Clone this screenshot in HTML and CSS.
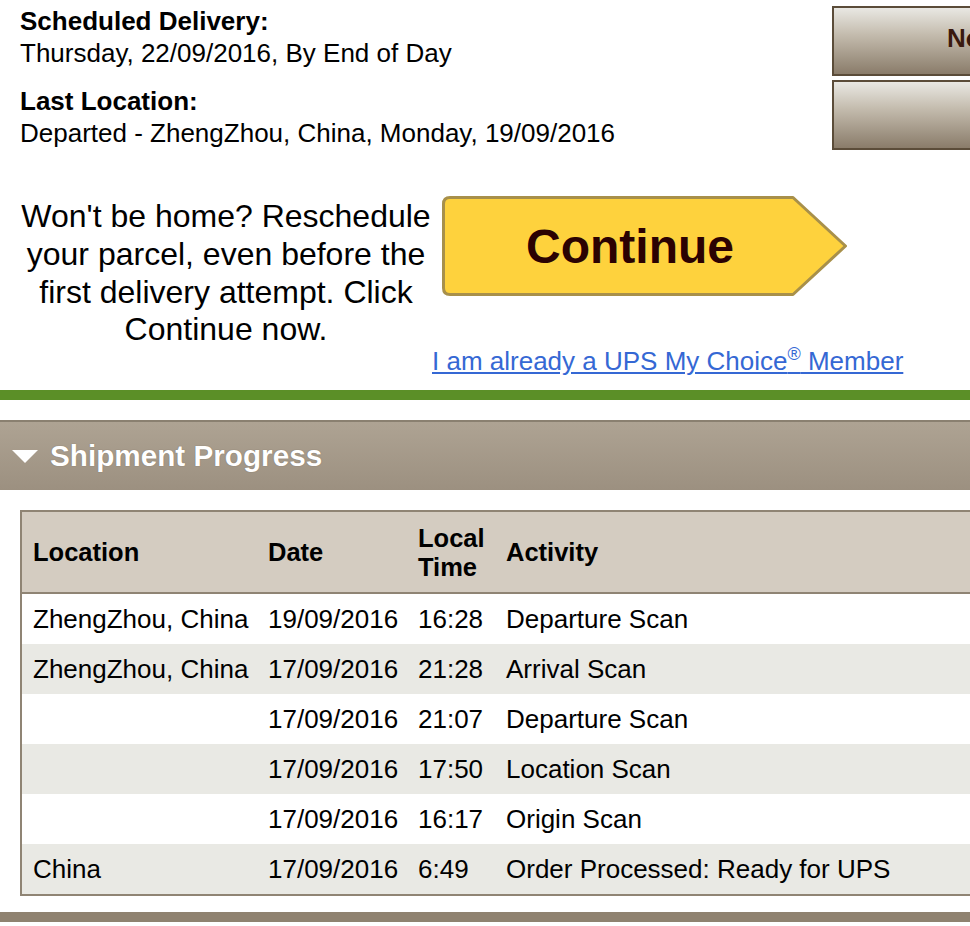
FILE: index.html
```html
<!DOCTYPE html>
<html lang="en">
<head>
    <meta charset="UTF-8">
    <meta name="viewport" content="width=device-width, initial-scale=1.0">
    <title>Tracking Detail</title>
    <link rel="stylesheet" href="styles.css">
</head>
<body>
    <div class="summary">
        <div class="status">
            <dl>
                <dt>Scheduled Delivery:</dt>
                <dd>Thursday, 22/09/2016, By End of Day</dd>
            </dl>
            <dl>
                <dt>Last Location:</dt>
                <dd>Departed - ZhengZhou, China, Monday, 19/09/2016</dd>
            </dl>
        </div>
        <div class="side-actions">
            <a class="side-btn" href="#">Notify Me</a>
            <a class="side-btn" href="#" aria-label="Change Delivery"></a>
        </div>
    </div>

    <div class="promo">
        <p class="promo-text">Won't be home? Reschedule your parcel, even before the first delivery attempt. Click Continue now.</p>
        <div class="promo-actions">
            <a class="continue-btn" href="#">
                <svg class="continue-shape" viewBox="0 0 406 100" preserveAspectRatio="none">
                    <path d="M8 1.5 H351 L403.5 50 L351 98.5 H8 Q1.5 98.5 1.5 92 V8 Q1.5 1.5 8 1.5 Z" fill="#fed23d" stroke="#a8904a" stroke-width="3" stroke-linejoin="round"/>
                </svg>
                <span class="continue-label">Continue</span>
            </a>
            <a class="member-link" href="#">I am already a UPS My Choice<sup>®</sup> Member</a>
        </div>
    </div>

    <div class="rule"></div>

    <div class="section-head">
        <svg class="caret" viewBox="0 0 26 13"><path d="M0 0 H26 L13 13 Z" fill="#fff"/></svg>
        <h2>Shipment Progress</h2>
    </div>

    <div class="progress">
        <table class="progress-table">
            <colgroup>
                <col class="col-loc">
                <col class="col-date">
                <col class="col-time">
                <col>
            </colgroup>
            <thead>
                <tr>
                    <th>Location</th>
                    <th>Date</th>
                    <th>Local<br>Time</th>
                    <th>Activity</th>
                </tr>
            </thead>
            <tbody>
                <tr>
                    <td>ZhengZhou, China</td>
                    <td>19/09/2016</td>
                    <td>16:28</td>
                    <td>Departure Scan</td>
                </tr>
                <tr>
                    <td>ZhengZhou, China</td>
                    <td>17/09/2016</td>
                    <td>21:28</td>
                    <td>Arrival Scan</td>
                </tr>
                <tr>
                    <td></td>
                    <td>17/09/2016</td>
                    <td>21:07</td>
                    <td>Departure Scan</td>
                </tr>
                <tr>
                    <td></td>
                    <td>17/09/2016</td>
                    <td>17:50</td>
                    <td>Location Scan</td>
                </tr>
                <tr>
                    <td></td>
                    <td>17/09/2016</td>
                    <td>16:17</td>
                    <td>Origin Scan</td>
                </tr>
                <tr>
                    <td>China</td>
                    <td>17/09/2016</td>
                    <td>6:49</td>
                    <td>Order Processed: Ready for UPS</td>
                </tr>
            </tbody>
        </table>
    </div>

    <div class="foot-bar"></div>
</body>
</html>
```

FILE: styles.css
```css
body {
    margin: 0;
    padding: 0;
    font-family: "Liberation Sans", Arial, sans-serif;
    color: #000;
    background: #fff;
    overflow: hidden;
}

/* delivery summary + side buttons */
.summary {
    display: flex;
    padding-left: 20px;
}
.status {
    width: 812px;
    flex-shrink: 0;
    padding-top: 5px;
}
.status dl {
    margin: 0 0 16px;
    font-size: 26px;
    line-height: 32px;
}
.status dl:last-child {
    margin-bottom: 0;
}
.status dt {
    font-weight: bold;
}
.status dd {
    margin: 0;
}
.side-actions {
    width: 343px;
    flex-shrink: 0;
    display: flex;
    flex-direction: column;
    gap: 4px;
    padding-top: 6px;
}
.side-btn {
    height: 70px;
    box-sizing: border-box;
    border: 2px solid #5b4c39;
    background: linear-gradient(#e9e8e3, #c4bcae 40%, #8a7c6a);
    color: #3a1a0f;
    font-weight: bold;
    font-size: 26px;
    text-decoration: none;
    display: flex;
    align-items: center;
    padding: 0 0 6px 113px;
    white-space: nowrap;
}

/* reschedule promo */
.promo {
    display: flex;
    padding-left: 20px;
    margin-top: 45px;
}
.promo-text {
    width: 412px;
    flex-shrink: 0;
    margin: 3px 0 0;
    font-size: 32px;
    line-height: 37.8px;
    text-align: center;
}
.promo-actions {
    display: flex;
    flex-direction: column;
    align-items: flex-start;
}
.continue-btn {
    position: relative;
    display: block;
    width: 406px;
    height: 100px;
    margin: 1px 0 0 10px;
    text-decoration: none;
}
.continue-shape {
    position: absolute;
    left: 0;
    top: 0;
    width: 100%;
    height: 100%;
}
.continue-label {
    position: absolute;
    left: 0;
    top: 0;
    right: 0;
    bottom: 0;
    display: flex;
    align-items: center;
    justify-content: center;
    padding-right: 30px;
    font-weight: bold;
    font-size: 48px;
    color: #2b0202;
}
.member-link {
    margin-top: 50px;
    font-size: 26px;
    line-height: 30px;
    color: #3568d4;
    white-space: nowrap;
}
.member-link sup {
    font-size: 18px;
    line-height: 0;
}

.rule {
    height: 10px;
    margin-top: 14px;
    background: #5b8f27;
}

/* shipment progress panel */
.section-head {
    display: flex;
    align-items: center;
    gap: 12px;
    height: 70px;
    box-sizing: border-box;
    margin-top: 20px;
    padding: 0 0 0 12px;
    border-top: 2px solid #8a8070;
    background: linear-gradient(#aea393, #9c9080);
}
.caret {
    width: 26px;
    height: 13px;
}
.section-head h2 {
    margin: 0;
    font-size: 29.7px;
    color: #fff;
    text-shadow: 0 0 1px rgba(60, 50, 40, 0.5);
}

.progress {
    width: 1000px;
    margin: 20px 0 0 20px;
    border: 2px solid #8f8474;
    border-right: none;
}
.progress-table {
    width: 100%;
    table-layout: fixed;
    border-collapse: separate;
    border-spacing: 0;
}
.col-loc {
    width: 235px;
}
.col-date {
    width: 150px;
}
.col-time {
    width: 88px;
}
.progress-table th {
    height: 82px;
    box-sizing: border-box;
    padding: 2px 10px 0 11px;
    background: #d4ccc1;
    border-bottom: 2px solid #8f8474;
    text-align: left;
    font-size: 25.5px;
    line-height: 29.5px;
    white-space: nowrap;
}
.progress-table td {
    height: 50px;
    box-sizing: border-box;
    padding: 0 10px 0 11px;
    font-size: 26px;
    white-space: nowrap;
}
.progress-table tbody tr:nth-child(even) {
    background: #e9e9e4;
}

.foot-bar {
    height: 10px;
    margin-top: 16px;
    background: #8f8270;
}
```
